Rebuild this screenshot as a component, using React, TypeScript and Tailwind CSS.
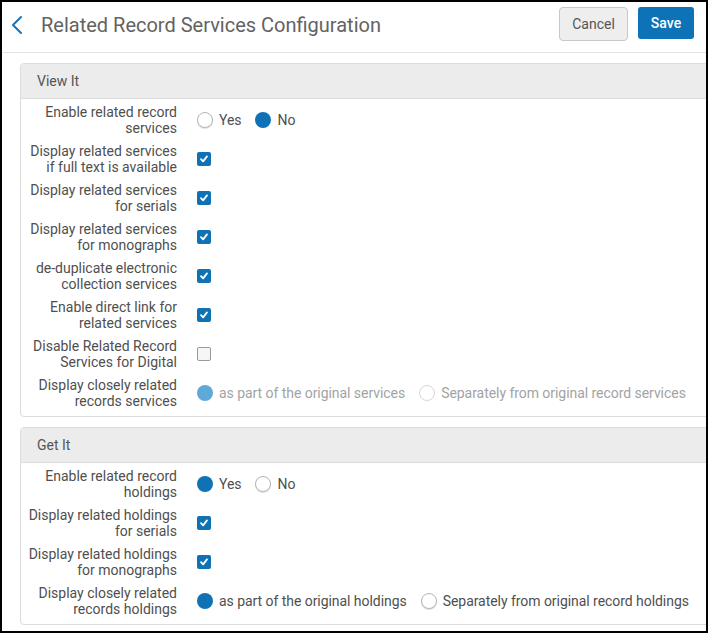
import React, { useState } from 'react';

type Row =
  | { label: [string, string]; kind: 'check'; checked: boolean }
  | { label: [string, string]; kind: 'radio'; options: string[]; selected: number; disabled?: boolean };

const viewIt: Row[] = [
  { label: ['Enable related record', 'services'], kind: 'radio', options: ['Yes', 'No'], selected: 1 },
  { label: ['Display related services', 'if full text is available'], kind: 'check', checked: true },
  { label: ['Display related services', 'for serials'], kind: 'check', checked: true },
  { label: ['Display related services', 'for monographs'], kind: 'check', checked: true },
  { label: ['de-duplicate electronic', 'collection services'], kind: 'check', checked: true },
  { label: ['Enable direct link for', 'related services'], kind: 'check', checked: true },
  { label: ['Disable Related Record', 'Services for Digital'], kind: 'check', checked: false },
  {
    label: ['Display closely related', 'records services'],
    kind: 'radio',
    options: ['as part of the original services', 'Separately from original record services'],
    selected: 0,
    disabled: true,
  },
];

const getIt: Row[] = [
  { label: ['Enable related record', 'holdings'], kind: 'radio', options: ['Yes', 'No'], selected: 0 },
  { label: ['Display related holdings', 'for serials'], kind: 'check', checked: true },
  { label: ['Display related holdings', 'for monographs'], kind: 'check', checked: true },
  {
    label: ['Display closely related', 'records holdings'],
    kind: 'radio',
    options: ['as part of the original holdings', 'Separately from original record holdings'],
    selected: 0,
  },
];

const Checkbox: React.FC<{ checked: boolean }> = ({ checked }) =>
  checked ? (
    <span className="w-[14px] h-[14px] rounded-[2px] bg-[#0f72b4] flex items-center justify-center">
      <svg width="10" height="10" viewBox="0 0 10 10">
        <path d="M2 5.2 L4.1 7.4 L8 2.4" fill="none" stroke="#fff" strokeWidth="1.8" strokeLinecap="round" strokeLinejoin="round" />
      </svg>
    </span>
  ) : (
    <span className="w-[14px] h-[14px] rounded-[2px] bg-[#f6f6f6] border border-[#9a9a9a]" />
  );

const Radio: React.FC<{ on: boolean; disabled?: boolean }> = ({ on, disabled }) =>
  on ? (
    <span className={`w-[16px] h-[16px] rounded-full ${disabled ? 'bg-[#5ea9d8]' : 'bg-[#0f72b4]'}`} />
  ) : (
    <span
      className={`w-[16px] h-[16px] rounded-full bg-white border ${
        disabled ? 'border-[#d6d6d6]' : 'border-[#b5b5b5] shadow-[0_1px_1px_rgba(0,0,0,0.12)]'
      }`}
    />
  );

const FormRow: React.FC<{ row: Row }> = ({ row }) => (
  <div className="flex items-center h-[32px]">
    <div className="w-[156px] text-right text-[14px] leading-[16px] text-[#4f4f4f] shrink-0">
      <div>{row.label[0]}</div>
      <div>{row.label[1]}</div>
    </div>
    <div className="ml-[20px] flex items-center">
      {row.kind === 'check' ? (
        <Checkbox checked={row.checked} />
      ) : (
        <div className="flex items-center gap-[14px]">
          {row.options.map((opt, i) => (
            <div key={opt} className="flex items-center gap-[6px]">
              <Radio on={i === row.selected} disabled={row.disabled} />
              <span className={`text-[14px] tracking-[-0.05px] ${row.disabled ? 'text-[#a3a3a3]' : 'text-[#4f4f4f]'}`}>{opt}</span>
            </div>
          ))}
        </div>
      )}
    </div>
  </div>
);

const Panel: React.FC<{ title: string; rows: Row[] }> = ({ title, rows }) => (
  <div className="w-[700px] border border-[#dcdcdc] rounded-[4px] overflow-hidden">
    <div className="h-[35px] bg-[#ececec] border-b border-[#dcdcdc] flex items-center pl-[16px] text-[14px] text-[#555]">
      {title}
    </div>
    <div className="flex flex-col gap-[7px] pt-[5px] pb-[7px]">
      {rows.map((r, i) => (
        <FormRow key={i} row={r} />
      ))}
    </div>
  </div>
);

export default function App() {
  const [saved, setSaved] = useState(false);

  return (
    <div
      className="w-[708px] h-[633px] border-2 border-black bg-white overflow-hidden"
      style={{ fontFamily: 'Roboto, "Liberation Sans", sans-serif' }}
    >
      <div className="h-[51px] border-b border-[#e3e3e3] flex items-center pl-[8px] pr-[12px]">
        <svg width="14" height="22" viewBox="0 0 14 22" className="mt-[-4px]">
          <path d="M11 3 L3 11 L11 19" fill="none" stroke="#1a73b8" strokeWidth="2" strokeLinecap="round" strokeLinejoin="round" />
        </svg>
        <h1 className="ml-[17px] mt-[-4px] text-[20px] text-[#636363] leading-none">Related Record Services Configuration</h1>
        <div className="ml-auto flex items-start gap-[10px] mt-[-6px]">
          <button className="h-[34px] w-[69px] rounded-[4px] border border-[#c8c8c8] bg-[#eeeeee] text-[14px] text-[#555]">
            Cancel
          </button>
          <button
            onClick={() => setSaved(!saved)}
            className="h-[32px] w-[56px] rounded-[3px] bg-[#0d73b6] text-[14px] font-medium text-white"
          >
            Save
          </button>
        </div>
      </div>
      <div className="pl-[18px] pt-[10px] flex flex-col gap-[10px]">
        <Panel title="View It" rows={viewIt} />
        <Panel title="Get It" rows={getIt} />
      </div>
    </div>
  );
}
